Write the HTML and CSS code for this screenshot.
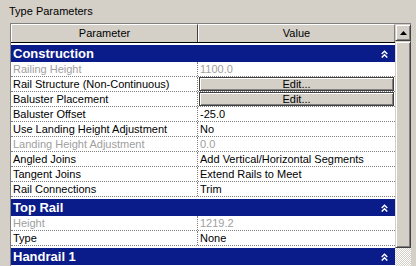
FILE: index.html
```html
<!DOCTYPE html>
<html lang="en">
<head>
    <meta charset="UTF-8">
    <title>Type Parameters</title>
    <link rel="stylesheet" href="styles.css">
</head>
<body>
    <div class="title">Type Parameters</div>
    <div class="frame">
        <div class="grid">
            <div class="head">
                <div class="hcell hcell-name">Parameter</div>
                <div class="hcell hcell-val">Value</div>
            </div>

            <div class="group"><span>Construction</span><svg class="collapse" width="7" height="8" viewBox="0 0 7 8"><polyline points="0.7,4 3.5,1.2 6.3,4"/><polyline points="0.7,7.6 3.5,4.8 6.3,7.6"/></svg></div>
            <div class="row"><div class="name dim">Railing Height</div><div class="val dim">1100.0</div></div>
            <div class="row"><div class="name">Rail Structure (Non-Continuous)</div><div class="val btn-cell"><div class="btn">Edit...</div></div></div>
            <div class="row"><div class="name">Baluster Placement</div><div class="val btn-cell"><div class="btn">Edit...</div></div></div>
            <div class="row"><div class="name">Baluster Offset</div><div class="val">-25.0</div></div>
            <div class="row"><div class="name">Use Landing Height Adjustment</div><div class="val">No</div></div>
            <div class="row"><div class="name dim">Landing Height Adjustment</div><div class="val dim">0.0</div></div>
            <div class="row"><div class="name">Angled Joins</div><div class="val">Add Vertical/Horizontal Segments</div></div>
            <div class="row"><div class="name">Tangent Joins</div><div class="val">Extend Rails to Meet</div></div>
            <div class="row"><div class="name">Rail Connections</div><div class="val">Trim</div></div>

            <div class="group"><span>Top Rail</span><svg class="collapse" width="7" height="8" viewBox="0 0 7 8"><polyline points="0.7,4 3.5,1.2 6.3,4"/><polyline points="0.7,7.6 3.5,4.8 6.3,7.6"/></svg></div>
            <div class="row"><div class="name dim">Height</div><div class="val dim">1219.2</div></div>
            <div class="row"><div class="name">Type</div><div class="val">None</div></div>

            <div class="group"><span>Handrail 1</span><svg class="collapse" width="7" height="8" viewBox="0 0 7 8"><polyline points="0.7,4 3.5,1.2 6.3,4"/><polyline points="0.7,7.6 3.5,4.8 6.3,7.6"/></svg></div>
        </div>
        <div class="scrollbar">
            <div class="sb-up"><svg width="7" height="4" viewBox="0 0 7 4"><polygon points="3.5,0 7,4 0,4"/></svg></div>
            <div class="sb-thumb"></div>
            <div class="sb-track"></div>
        </div>
    </div>
</body>
</html>
```

FILE: styles.css
```css
body {
    margin: 0;
    background-color: #d4d0c8;
    font-family: "Liberation Sans", Arial, sans-serif;
    font-size: 11px;
    color: #000;
    overflow: hidden;
}

.title {
    height: 18px;
    padding: 5px 0 0 9px;
    line-height: 13px;
}

.frame {
    display: flex;
    margin-left: 10px;
    width: 400px;
    height: 242px;
    border-top: 1px solid #808080;
    border-left: 1px solid #808080;
    overflow: hidden;
}

.grid {
    width: 384px;
    background-color: #fff;
}

.head {
    display: flex;
    height: 19px;
    border-bottom: 1px solid #000;
    box-sizing: border-box;
}

.hcell {
    background-color: #d4d0c8;
    border-top: 1px solid #fff;
    border-left: 1px solid #fff;
    text-align: center;
    line-height: 16px;
    box-sizing: border-box;
}

.hcell-name {
    width: 187px;
    border-right: 1px solid #404040;
}

.hcell-val {
    flex: 1;
    border-right: 1px solid #808080;
}

.group {
    display: flex;
    align-items: center;
    justify-content: space-between;
    height: 17px;
    margin-top: 2px;
    padding: 0 7px 0 2px;
    background-color: #0a1c8a;
    color: #fff;
    font-weight: bold;
    font-size: 13px;
}

.collapse polyline {
    fill: none;
    stroke: #fff;
    stroke-width: 1.4;
}

.row {
    display: flex;
    height: 15px;
    border-bottom: 1px dotted #808080;
    box-sizing: border-box;
    line-height: 14px;
    white-space: nowrap;
}

.name {
    width: 187px;
    padding-left: 2px;
    border-right: 1px dotted #808080;
    box-sizing: border-box;
}

.val {
    flex: 1;
    padding-left: 2px;
}

.dim {
    color: #a0a0a0;
}

.btn-cell {
    padding: 0 1px;
}

.btn {
    height: 14px;
    background-color: #d4d0c8;
    border: 1px solid #404040;
    box-shadow: inset 1px 1px #fff, inset -1px -1px #808080;
    box-sizing: border-box;
    text-align: center;
    line-height: 12px;
}

.scrollbar {
    display: flex;
    flex-direction: column;
    width: 16px;
}

.sb-up,
.sb-thumb {
    flex-shrink: 0;
    background-color: #d4d0c8;
    border: 1px solid;
    border-color: #d4d0c8 #404040 #404040 #d4d0c8;
    box-shadow: inset 1px 1px #fff, inset -1px -1px #808080;
    box-sizing: border-box;
}

.sb-up {
    display: flex;
    align-items: center;
    justify-content: center;
    height: 17px;
}

.sb-thumb {
    height: 207px;
}

.sb-track {
    flex: 1;
    background: repeating-conic-gradient(#fff 0 25%, #d4d0c8 0 50%) 0 0 / 2px 2px;
}
```
